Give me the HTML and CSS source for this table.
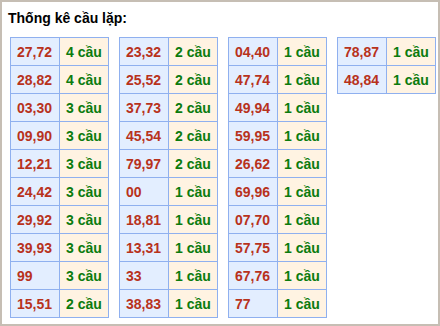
FILE: index.html
```html
<!DOCTYPE html>
<html lang="vi">
<head>
<meta charset="utf-8">
<link rel="stylesheet" href="styles.css">
</head>
<body>
<div class="box">
  <div class="title">Thống kê cầu lặp:</div>
  <div class="tables">
    <table class="grid">
      <tr><td class="n">27,72</td><td class="c">4 cầu</td></tr>
      <tr><td class="n">28,82</td><td class="c">4 cầu</td></tr>
      <tr><td class="n">03,30</td><td class="c">3 cầu</td></tr>
      <tr><td class="n">09,90</td><td class="c">3 cầu</td></tr>
      <tr><td class="n">12,21</td><td class="c">3 cầu</td></tr>
      <tr><td class="n">24,42</td><td class="c">3 cầu</td></tr>
      <tr><td class="n">29,92</td><td class="c">3 cầu</td></tr>
      <tr><td class="n">39,93</td><td class="c">3 cầu</td></tr>
      <tr><td class="n">99</td><td class="c">3 cầu</td></tr>
      <tr><td class="n">15,51</td><td class="c">2 cầu</td></tr>
    </table>
    <table class="grid">
      <tr><td class="n">23,32</td><td class="c">2 cầu</td></tr>
      <tr><td class="n">25,52</td><td class="c">2 cầu</td></tr>
      <tr><td class="n">37,73</td><td class="c">2 cầu</td></tr>
      <tr><td class="n">45,54</td><td class="c">2 cầu</td></tr>
      <tr><td class="n">79,97</td><td class="c">2 cầu</td></tr>
      <tr><td class="n">00</td><td class="c">1 cầu</td></tr>
      <tr><td class="n">18,81</td><td class="c">1 cầu</td></tr>
      <tr><td class="n">13,31</td><td class="c">1 cầu</td></tr>
      <tr><td class="n">33</td><td class="c">1 cầu</td></tr>
      <tr><td class="n">38,83</td><td class="c">1 cầu</td></tr>
    </table>
    <table class="grid">
      <tr><td class="n">04,40</td><td class="c">1 cầu</td></tr>
      <tr><td class="n">47,74</td><td class="c">1 cầu</td></tr>
      <tr><td class="n">49,94</td><td class="c">1 cầu</td></tr>
      <tr><td class="n">59,95</td><td class="c">1 cầu</td></tr>
      <tr><td class="n">26,62</td><td class="c">1 cầu</td></tr>
      <tr><td class="n">69,96</td><td class="c">1 cầu</td></tr>
      <tr><td class="n">07,70</td><td class="c">1 cầu</td></tr>
      <tr><td class="n">57,75</td><td class="c">1 cầu</td></tr>
      <tr><td class="n">67,76</td><td class="c">1 cầu</td></tr>
      <tr><td class="n">77</td><td class="c">1 cầu</td></tr>
    </table>
    <table class="grid">
      <tr><td class="n">78,87</td><td class="c">1 cầu</td></tr>
      <tr><td class="n">48,84</td><td class="c">1 cầu</td></tr>
    </table>
  </div>
</div>
</body>
</html>
```
FILE: styles.css
```css
html, body {
  margin: 0;
  padding: 0;
  background: #ffffff;
}
.box {
  width: 440px;
  height: 326px;
  box-sizing: border-box;
  border: 2px solid #c6beb4;
  font-family: "Liberation Sans", Arial, sans-serif;
}
.title {
  padding: 8px 0 0 6px;
  font-size: 14px;
  line-height: 16px;
  font-weight: bold;
  color: #000;
}
.tables {
  display: flex;
  align-items: flex-start;
  gap: 10px;
  margin: 11px 0 0 8px;
}
.grid {
  border-collapse: collapse;
  table-layout: fixed;
  width: 98px;
}
.grid td {
  border: 1px solid #8fb0ef;
  height: 28px;
  padding: 0 0 0 6px;
  font-size: 14px;
  font-weight: bold;
  white-space: nowrap;
  box-sizing: border-box;
}
.grid .n {
  width: 49px;
  background: #e3eeff;
  color: #b8321c;
}
.grid .c {
  width: 49px;
  background: #fff3e2;
  color: #0b7b0e;
}
```
